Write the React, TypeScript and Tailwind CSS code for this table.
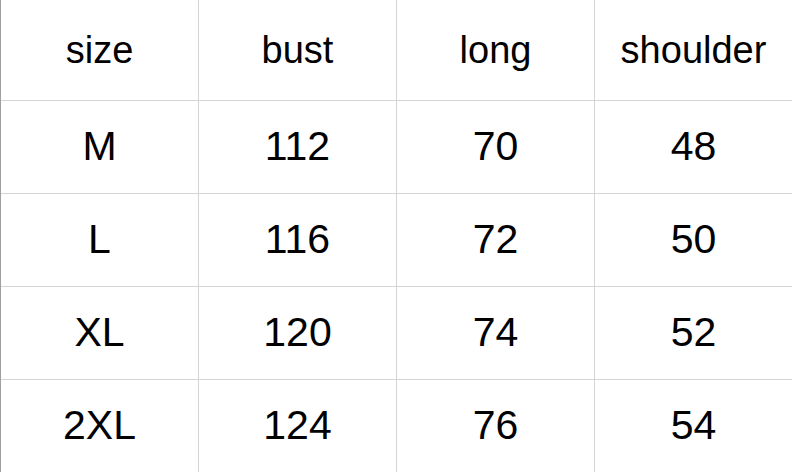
const rows = [
  ["size", "bust", "long", "shoulder"],
  ["M", "112", "70", "48"],
  ["L", "116", "72", "50"],
  ["XL", "120", "74", "52"],
  ["2XL", "124", "76", "54"],
];

const App = () => {
  return (
    <div className="w-[792px] h-[472px] bg-white border-l border-[#a0a0a0] overflow-hidden font-['Liberation_Sans',Arial,sans-serif] text-black">
      <div className="grid grid-cols-[198px_198px_198px_197px]">
        {rows.map((row, r) =>
          row.map((cell, c) => (
            <div
              key={`${r}-${c}`}
              className={`flex items-center justify-center ${
                r === 0 ? "h-[101px] text-[38px]" : r === 4 ? "h-[92px] text-[41px]" : "h-[93px] text-[41px]"
              } ${r < 4 ? "border-b border-[#d4d4d4]" : ""} ${
                c < 3 ? "border-r border-[#d4d4d4]" : ""
              }`}
            >
              {cell}
            </div>
          ))
        )}
      </div>
    </div>
  );
};

export default App;
